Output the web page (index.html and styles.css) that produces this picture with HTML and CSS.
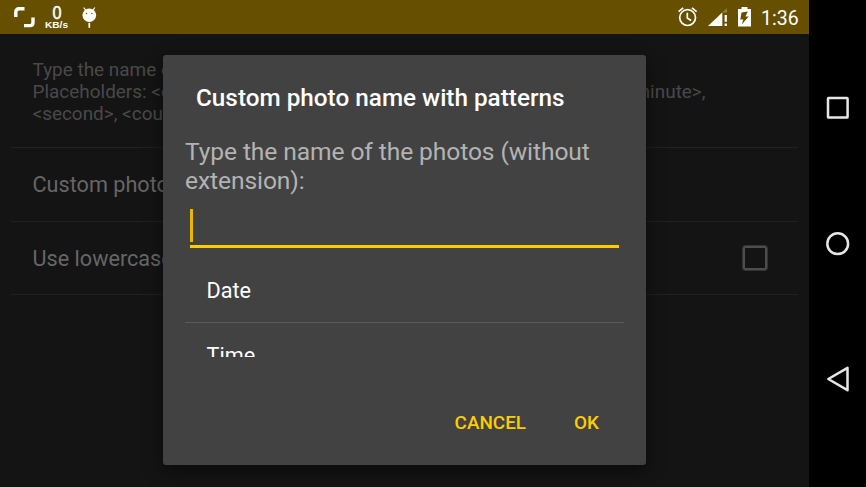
FILE: index.html
```html
<!DOCTYPE html>
<html>
  <head>
    <meta charset='utf-8'>
    <title>Custom photo name</title>
    <link rel="stylesheet" href="styles.css">
  </head>
  <body>
    <div class='screen'>
      <div class='statusbar'>
        <svg class='notifications' width='110' height='34' viewBox='0 0 110 34'>
          <path d='M15.8 17v-5q0-3.2 3.2-3.2h5.5M24 25.6h5.8q3.2 0 3.2-3.2v-5' fill='none' stroke='#fff' stroke-width='3.4' />
          <text class='speed' x='52.6' y='18.6' textLength='9' lengthAdjust='spacingAndGlyphs'>0</text>
          <text class='unit' x='45' y='27.8' textLength='23' lengthAdjust='spacingAndGlyphs'>KB/s</text>
          <path d='M83.6 7.5l2.4 3.2M94.9 7.5l-2.4 3.2' stroke='#fff' stroke-width='1.1' />
          <circle cx='89.3' cy='15.2' r='6.8' fill='#fff' />
          <path d='M89.3 22.8v5' stroke='#fff' stroke-width='1.7' />
          <circle cx='86.5' cy='13.4' r='.75' fill='#665000' />
          <circle cx='91.9' cy='13.4' r='.75' fill='#665000' />
        </svg>
        <svg class='system' width='86' height='34' viewBox='675 0 86 34'>
          <g fill='none' stroke='#fff' stroke-width='1.7'>
            <circle cx='687.6' cy='17.6' r='7.9' />
            <path d='M687.3 12.8v5.2l3.8 2.5M678.6 11.6l4.6-3.8M696.6 11.6L692 7.8' />
          </g>
          <path d='M722.3 12.5L708 26h14.3z' fill='#fff' />
          <path d='M727 8l-4.7 4.4h4.7z' fill='#8f8046' />
          <path d='M724.6 15h2.3v6.7h-2.3zM724.6 23.5h2.3V26h-2.3z' fill='#fff' />
          <path d='M738 9h3.5V7h6v2h3.5v17.5h-13z' fill='#fff' />
          <path d='M747.8 11.4l-6.3 1.2-1.2 7h3l-1.6 5 7-8.2h-3.2z' fill='#665000' />
        </svg>
        <span class='clock'>1:36</span>
      </div>
      <div class='preferences'>
        <div class='preference hint'>
          <div>Type the name of the photos (without extension).</div>
          <div class='placeholders'><span>Placeholders: &lt;date&gt;, &lt;time&gt;, &lt;year&gt;, &lt;month&gt;,</span><span>&lt;day&gt;, &lt;hour&gt;, &lt;minute&gt;,</span></div>
          <div>&lt;second&gt;, &lt;counter&gt;</div>
        </div>
        <div class='preference'>Custom photo name</div>
        <div class='preference'>Use lowercase <span class='checkbox'></span></div>
      </div>
    </div>
    <div class='navbar'>
      <svg width='28' height='28' viewBox='0 0 28 28'><rect x='4' y='4' width='19.6' height='19.6' rx='.6' /></svg>
      <svg width='28' height='28' viewBox='0 0 28 28'><circle cx='13.7' cy='13.7' r='10.4' /></svg>
      <svg width='28' height='28' viewBox='0 0 28 28'><path d='M23.5 2.8v22.4L4.3 14z' /></svg>
    </div>
    <div class='dialog'>
      <h1 class='title'>Custom photo name with patterns</h1>
      <p class='message'>Type the name of the photos (without<br>extension):</p>
      <div class='input'><span class='caret'></span></div>
      <div class='patterns'>
        <div class='pattern'>Date</div>
        <div class='pattern'>Time</div>
      </div>
      <div class='buttons'>
        <span class='button'>CANCEL</span>
        <span class='button'>OK</span>
      </div>
    </div>
  </body>
</html>
```

FILE: styles.css
```css
body {
  margin: 0;
  width: 866px;
  height: 487px;
  display: flex;
  overflow: hidden;
  background: #000;
  font-family: Roboto, sans-serif;
}

.screen {
  width: 809px;
  background: #141414;
}

.statusbar {
  height: 34px;
  display: flex;
  align-items: center;
  background: #665000;
  color: #fff;
}

.system {
  margin-left: auto;
}

.speed {
  font: 17.5px "Liberation Sans", sans-serif;
  fill: #fff;
  stroke: #fff;
  stroke-width: 0.5px;
}

.unit {
  font: bold 9.5px "Liberation Sans", sans-serif;
  fill: #fff;
}

.clock {
  width: 48px;
  padding-top: 2px;
  font-size: 19.5px;
}

.preferences {
  padding: 0 11px;
}

.preference {
  height: 73.5px;
  box-sizing: border-box;
  display: flex;
  align-items: center;
  padding: 1px 31px 0 21.5px;
  border-bottom: 1px solid #202020;
  color: #666;
  font-size: 21.65px;
  white-space: nowrap;
}

.hint {
  height: 114px;
  display: block;
  padding-top: 25px;
  color: #494949;
  font-size: 18.95px;
  line-height: 22px;
}

.placeholders {
  width: 673px;
  display: flex;
  justify-content: space-between;
}

.checkbox {
  width: 20px;
  height: 20px;
  margin-bottom: 1px;
  margin-left: auto;
  border: 3px solid #4d4d4d;
  border-width: 2.5px;
  outline: 0.5px solid #333;
  border-radius: 2px;
}

.navbar {
  width: 57px;
  box-sizing: border-box;
  padding: 94px 0;
  display: flex;
  flex-direction: column;
  align-items: center;
  justify-content: space-between;
}

.navbar svg {
  fill: none;
  stroke: #e6e6e6;
  stroke-width: 2.5;
  stroke-linejoin: round;
}

/* floats over the preference list */
.dialog {
  position: absolute;
  left: 163px;
  top: 55px;
  width: 483px;
  height: 410px;
  box-sizing: border-box;
  padding: 0 22px;
  border-radius: 3px;
  background: #424242;
  box-shadow: 0 6px 18px rgba(0, 0, 0, 0.5);
}

.title {
  margin: 28px 0 0 11px;
  color: #fff;
  font-size: 24.3px;
  font-weight: 500;
  line-height: 29px;
  white-space: nowrap;
}

.message {
  margin: 26px 0 0;
  color: #b3b3b3;
  font-size: 24.6px;
  letter-spacing: -0.1px;
  line-height: 28.5px;
  white-space: nowrap;
}

.input {
  height: 36px;
  margin: 14px 5px 0;
  border-bottom: 3px solid #fc0;
}

.caret {
  display: block;
  width: 3px;
  height: 33px;
  background: #e6b800;
}

.patterns {
  height: 109px;
  overflow: hidden;
}

.pattern {
  height: 64px;
  padding: 10px 22px 0 21.5px;
  border-bottom: 1px solid #5b5b5b;
  color: #fff;
  font-size: 21.65px;
  line-height: 66px;
}

.pattern + .pattern {
  padding-top: 0;
}

.buttons {
  display: flex;
  justify-content: flex-end;
  gap: 48px;
  margin: 54px 25px 0 0;
  color: #fc0;
  font-size: 18.9px;
  font-weight: 500;
  line-height: 24px;
}
```
